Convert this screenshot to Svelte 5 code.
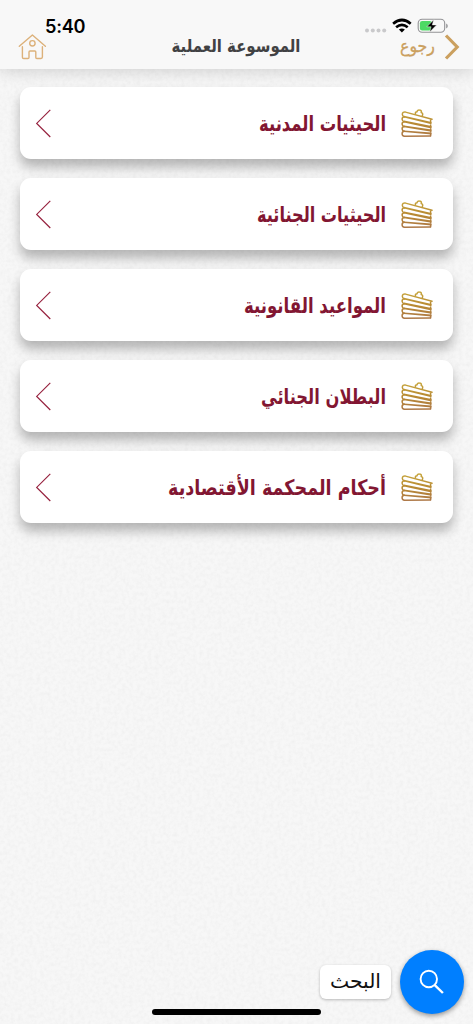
<script>
  const items = [
    { label: 'الحيثيات المدنية', width: 127 },
    { label: 'الحيثيات الجنائية', width: 129 },
    { label: 'المواعيد القانونية', width: 142 },
    { label: 'البطلان الجنائي', width: 125 },
    { label: 'أحكام المحكمة الأقتصادية', width: 218 }
  ];
</script>

<div class="screen">
  <svg class="paper" width="473" height="1024" aria-hidden="true">
    <filter id="grain" x="0" y="0" width="100%" height="100%">
      <feTurbulence type="fractalNoise" baseFrequency="0.27" numOctaves="3" seed="4" />
      <feColorMatrix values="0 0 0 0 0  0 0 0 0 0  0 0 0 0 0  0.05 0 0 0 -0.018" />
    </filter>
    <rect width="473" height="1024" filter="url(#grain)" />
  </svg>

  <header>
    <div class="status">
      <span class="time">5:40</span>
      <svg class="indicators" width="84" height="18" viewBox="0 0 84 18">
        <g fill="#c9c9cb">
          <circle cx="3" cy="13.4" r="2" /><circle cx="8.8" cy="13.4" r="2" />
          <circle cx="14.5" cy="13.4" r="2" /><circle cx="20.2" cy="13.4" r="2" />
        </g>
        <g fill="none" stroke="#000" stroke-width="2.7">
          <path d="M29.1 6.7q8.9-7.4 17.6 0" />
          <path d="M32.1 10.2q5.8-4.6 11.6 0" />
        </g>
        <path d="M34.9 12.5q3-2.1 6 0l-3 3.1z" />
        <rect x="54.2" y="2.2" width="26.5" height="13" rx="3.9" fill="none" stroke="#929295" stroke-width="1.1" />
        <path d="M82.2 6.4v5q1.6-.7 1.6-2.5t-1.6-2.5z" fill="#929295" />
        <rect x="55.9" y="3.9" width="12" height="9.6" rx="2.3" fill="#4cd964" />
        <path d="M69.7 2.8 62.8 9.8h4.3l-1.4 5.2 6.9-7.1h-4.3z" fill="#000" stroke="#f8f8f8" stroke-width=".5" />
      </svg>
    </div>
    <nav>
      <svg width="29" height="27" viewBox="0 0 29 27" fill="none" stroke="#dcb17a" stroke-width="1.4" stroke-linecap="round" stroke-linejoin="round">
        <path d="M1.3 12.2 14.4 1l13 11.2M4.4 12.7v10.6q0 1.2 1.3 1.2H10q1 0 1-1V18q0-1 1-1h4.8q1 0 1 1v5.5q0 1 1 1H23q1.4 0 1.4-1.4V12.7" />
        <circle cx="14.4" cy="9.3" r="2.7" />
      </svg>
      <svg class="title" width="130" height="28"><text x="129.5" y="18.5" textLength="129" lengthAdjust="spacingAndGlyphs">الموسوعة العملية</text></svg>
      <div class="back">
        <svg width="38" height="28"><text x="36" y="19" textLength="35" lengthAdjust="spacingAndGlyphs">رجوع</text></svg>
        <svg width="16" height="26" viewBox="0 0 16 26"><path d="M2 1.5 13.2 13 2 24.5" fill="none" stroke="#cba05f" stroke-width="3.2" /></svg>
      </div>
    </nav>
  </header>

  <main>
    {#each items as item}
      <div class="card">
        <svg width="18" height="30" viewBox="0 0 18 30"><path d="M15.3 1.8 1.7 15.4 15.3 29" fill="none" stroke="#97233f" stroke-width="1.2" /></svg>
        <svg class="label" width={item.width} height="40"><text x={item.width} y="27.5" textLength={item.width} lengthAdjust="spacingAndGlyphs">{item.label}</text></svg>
        <svg class="books" width="33" height="30" viewBox="0 0 33 30" fill="none" stroke="url(#gold)" stroke-width="1.5" stroke-linejoin="round" stroke-linecap="round">
          <defs><linearGradient id="gold" gradientUnits="userSpaceOnUse" x1="0" y1="0" x2="0" y2="28"><stop stop-color="#c8a83f" /><stop offset=".5" stop-color="#b88a32" /><stop offset="1" stop-color="#ad7747" /></linearGradient></defs>
          <path d="M14.5 5q-.7-2 1.6-2.3.3-2 2.3-1.7 2.6.2 1.8 2.6 2.4.6 1 3.5" />
          <path d="M31 10.3 4.5 3.1Q1.5 2.6 1.3 5.2q0 2 2.1 2.6" />
          <path d="M3.4 7.8Q1 8 1.1 10.3q.1 2 2.3 2.4-2.3.1-2.3 2.4.1 2 2.3 2.4-2.3.1-2.3 2.4.1 2 2.3 2.4-2.3.1-2.3 2.4t2.4 2.6l26-.3" />
          <path d="M29.6 11v2.8M29.6 16v2.4M29.6 20v2.2M29.6 24v2.8" />
          <g fill="url(#gold)" stroke="none">
            <path d="M3 6.8 30.5 13v2.2L3 8.6z" />
            <path d="M3 11.6 30.5 17v2.5L3 13.5z" />
            <path d="M3 16.6l27.5 4v2.2L3 18.3z" />
            <path d="M3 21.4l27.5 2.2v1.8L3 23z" />
          </g>
        </svg>
      </div>
    {/each}
  </main>

  <div class="search">
    <span class="tip"><svg width="52" height="32"><text x="51" y="21.5" textLength="51" lengthAdjust="spacingAndGlyphs">البحث</text></svg></span>
    <button aria-label="البحث">
      <svg width="26" height="26" viewBox="0 0 26 26" fill="none" stroke="#fff" stroke-width="1.9"><circle cx="9.8" cy="10" r="8.2" /><path d="m15.5 15.8 8.4 8.2" stroke-width="2.4" /></svg>
    </button>
  </div>
  <div class="home-bar"></div>
</div>

<style>
  :global(body) { background: #f5f5f5; }
  .screen { position: relative; width: 473px; height: 1024px; overflow: hidden; background: #f7f7f7; display: flex; flex-direction: column; isolation: isolate; }
  .paper { position: absolute; inset: 0; z-index: -1; }
  svg { display: block; flex: none; overflow: visible; }
  text { direction: rtl; text-anchor: start; font-family: "DejaVu Sans", sans-serif; }
  header { height: 69px; box-sizing: border-box; background: #f8f8f8; box-shadow: 0 2px 16px rgba(0,0,0,.16); }
  .status { height: 33px; display: flex; justify-content: space-between; align-items: flex-start; padding: 17px 25px 0 45px; box-sizing: border-box; }
  .time { font: 600 18.2px/19px Inter, sans-serif; letter-spacing: -.3px; }
  nav { display: grid; grid-template-columns: 153px 1fr auto; padding: 0 13px 0 18px; height: 28px; align-items: center; }
  .title text { font-size: 17.5px; font-weight: 700; fill: #414143; }
  .back { display: flex; align-items: center; gap: 7px; }
  .back text { font-size: 18px; fill: #cba05f; stroke: #cba05f; stroke-width: .3px; }
  main { display: flex; flex-direction: column; gap: 19px; padding: 18px 20px; }
  .card { height: 72px; border-radius: 11px; background: #fff; box-shadow: 0 8px 12px rgba(0,0,0,.27); display: flex; align-items: center; padding: 0 19px 0 15px; box-sizing: border-box; }
  .label { margin-left: auto; margin-right: 15px; }
  .label text { font-size: 21.5px; font-weight: 700; fill: #821632; }
  .books { margin-top: 2px; }
  .search { margin-top: auto; display: flex; justify-content: flex-end; align-items: center; gap: 9px; padding: 0 9px 0 0; }
  .tip { background: #fff; border-radius: 6px; width: 71px; height: 34px; display: flex; align-items: center; justify-content: center; box-shadow: 0 1px 3px rgba(0,0,0,.25); }
  .tip text { font-size: 20px; fill: #111; }
  button { width: 64px; height: 64px; border: 0; border-radius: 50%; background: #007fff; display: flex; align-items: center; justify-content: center; padding: 0; box-shadow: 0 2px 5px rgba(0,0,0,.4); }
  .home-bar { width: 169px; height: 6px; border-radius: 3px; background: #000; margin: -5.5px auto 9.5px; }
</style>
